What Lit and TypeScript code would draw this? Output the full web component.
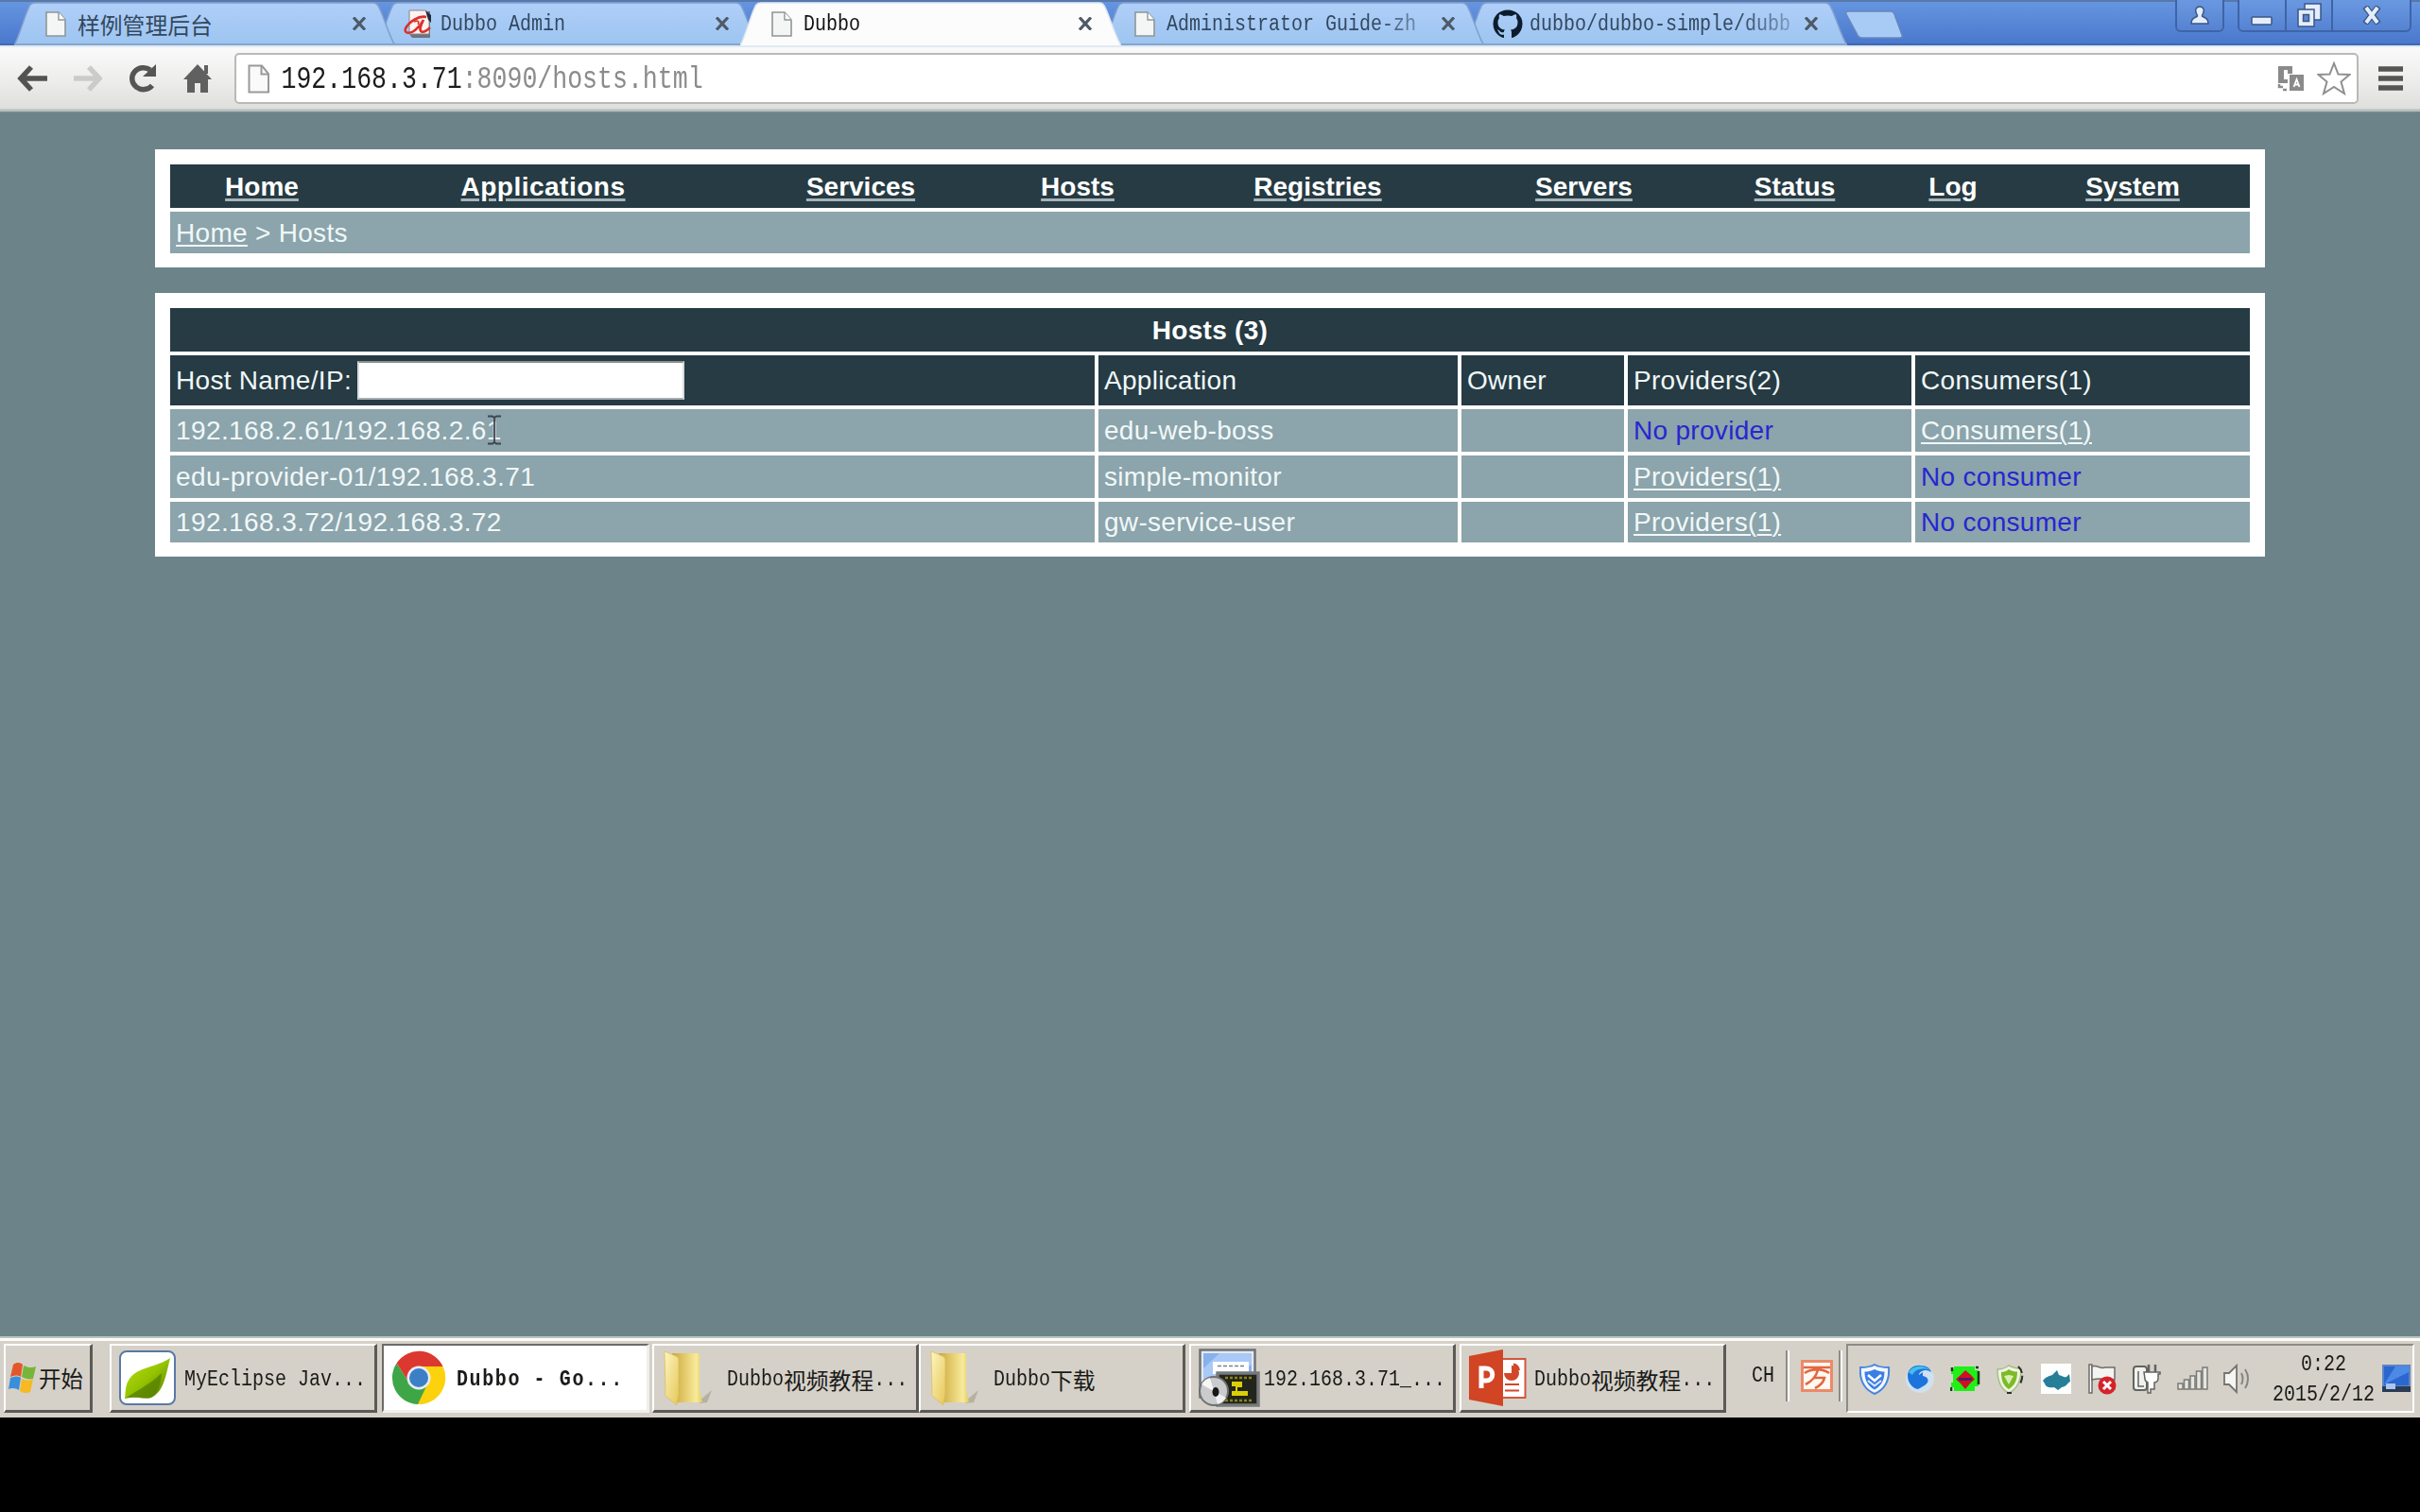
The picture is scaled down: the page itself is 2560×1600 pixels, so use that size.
import { LitElement, html, css, svg, nothing, TemplateResult } from "lit";
import { customElement, property } from "lit/decorators.js";
import { classMap } from "lit/directives/class-map.js";

type Icon = TemplateResult;

const pageIcon = html`<svg width="22" height="27" viewBox="0 0 22 27">
  <path d="M1 1H14L21 9V26H1Z" fill="#f4f6f5" stroke="#8e9796" stroke-width="1.6" />
  <path d="M14 1V9H21" fill="#fff" stroke="#8e9796" stroke-width="1.4" />
</svg>`;

const alibabaIcon = html`<svg width="31" height="31" viewBox="0 0 31 31">
  <path d="M7 2H29V30H10L7 26Z" fill="#6d7480" />
  <path d="M7 1H24L28 5V26H7Z" fill="#fdf3f0" stroke="#8a8388" />
  <path d="M24 1L30 6V14L27 11Z" fill="#222b3a" />
  <path d="M25 8C17 6 7 13 3 20C1 26 8 26 13 22C18 18 21 13 22 11C19 17 17 22 20 23.500C23 24.500 26 22 29 19" fill="none" stroke="#dd2f2b" stroke-width="2.600" />
  <path d="M12 13C16 11 18 13 16 16" fill="none" stroke="#dd2f2b" stroke-width="1.600" />
</svg>`;

const githubIcon = html`<svg width="34" height="33" viewBox="0 0 34 33">
  <path d="M17 1.500C26 1.500 32.500 8 32.500 16C32.500 23.500 28 28.500 22 31C21 31.200 21 30.600 21 30V25.500C21 23.800 20.500 23 20 22.500C24 22 27.500 20.500 27.500 14.500C27.500 12.700 27 11.500 26 10.300C26.200 9.600 26.600 8 25.900 6.300C24 6 22 7.600 21.500 8C18.500 7.200 15.500 7.200 12.500 8C12 7.600 10 6 8.100 6.300C7.400 8 7.800 9.600 8 10.300C7 11.500 6.500 12.700 6.500 14.500C6.500 20.500 10 22 14 22.500C13.300 23 13 24 12.900 25C11.500 25.600 9.500 25.600 8.200 23.600C7.500 22.600 6.500 22.500 6 22.700C7.500 23.700 7.500 25.500 8.500 26.800C9.500 28 11.500 28 13 27.700V30C13 30.600 13 31.200 12 31C6 28.500 1.500 23.500 1.500 16C1.500 8 8 1.500 17 1.500Z" fill="#0c1c2e" />
</svg>`;

interface Tab { title: string; icon: Icon; active?: boolean; }

const TABS: Tab[] = [
  { title: "样例管理后台", icon: pageIcon },
  { title: "Dubbo Admin", icon: alibabaIcon },
  { title: "Dubbo", icon: pageIcon, active: true },
  { title: "Administrator Guide-zh", icon: pageIcon },
  { title: "dubbo/dubbo-simple/dubb", icon: githubIcon },
];

const NAV = ["Home", "Applications", "Services", "Hosts", "Registries", "Servers", "Status", "Log", "System"];

interface Host { name: string; app: string; owner: string; providers: number; consumers: number; }

const HOSTS: Host[] = [
  { name: "192.168.2.61/192.168.2.61", app: "edu-web-boss", owner: "", providers: 0, consumers: 1 },
  { name: "edu-provider-01/192.168.3.71", app: "simple-monitor", owner: "", providers: 1, consumers: 0 },
  { name: "192.168.3.72/192.168.3.72", app: "gw-service-user", owner: "", providers: 1, consumers: 0 },
];

const leafIcon = html`<svg width="60" height="58" viewBox="0 0 60 58">
  <defs><linearGradient id="lf" x1="0" y1="0" x2="1" y2="1"><stop offset=".1" stop-color="#b4da10" /><stop offset=".5" stop-color="#94c400" /><stop offset="1" stop-color="#4f7a00" /></linearGradient></defs>
  <rect x="1" y="1" width="58" height="56" rx="7" fill="#fff" stroke="#5b78a6" stroke-width="2" />
  <path d="M54 8C40 18 20 17 11 30C6 37 7 44 6 51C22 48 28 52 34 50C47 44 49 28 54 8Z" fill="url(#lf)" />
  <path d="M6 51C16 44 30 38 45 24C44 38 40 47 33 50C25 52 18 48 6 51Z" fill="#557f00" opacity=".75" />
</svg>`;

const chromeIcon = html`<svg width="58" height="58" viewBox="0 0 58 58">
  <path d="M29 29V17H54.500A28 28 0 0 1 28 57Z" fill="#fbd20c" />
  <path d="M29 29L38 36L28 57A28 28 0 0 1 5.600 13.500L18 33Z" fill="#3fa648" />
  <path d="M5.600 13.500A28 28 0 0 1 54.500 17H29L18 33Z" fill="#dc3830" />
  <circle cx="29" cy="29" r="12.500" fill="#e6eef2" />
  <circle cx="29" cy="29" r="10" fill="#3c7fc6" />
</svg>`;

const folderIcon = html`<svg width="52" height="60" viewBox="0 0 52 60">
  <defs>
    <linearGradient id="fa" x1="0" y1="0" x2="1" y2="0"><stop offset="0" stop-color="#c9a640" /><stop offset=".45" stop-color="#e6cd6e" /><stop offset=".8" stop-color="#f7ea9c" /><stop offset="1" stop-color="#e3cd55" /></linearGradient>
    <linearGradient id="fb" x1="0" y1="0" x2="1" y2="1"><stop offset="0" stop-color="#fdf6bd" /><stop offset="1" stop-color="#e6c65a" /></linearGradient>
  </defs>
  <path d="M38 54L51 43L46 56L38 57Z" fill="#a8a492" opacity=".7" />
  <path d="M9 4L36 4C38 4 38 5 38 6V42L41 56H14Z" fill="url(#fa)" />
  <path d="M1 2L13 7C15 8 16 9 16 11V46C16 52 14 54 14 59L3 50C1 48 2 46 2 42Z" fill="url(#fb)" stroke="#d8bb55" stroke-width=".7" />
</svg>`;

const remoteIcon = html`<svg width="65" height="62" viewBox="0 0 65 62">
  <rect x="1.500" y="1.500" width="58" height="50" fill="#e6e9ee" stroke="#6d7177" stroke-width="2.500" />
  <rect x="5" y="5" width="51" height="34" fill="#86b1ee" />
  <path d="M5 21L22 5H56V17L20 39H5Z" fill="#a9c9f6" />
  <rect x="15" y="14" width="38" height="13" fill="#fff" />
  <path d="M20 18.500H48" stroke="#7a828e" stroke-width="1.500" stroke-dasharray="4 2" />
  <rect x="20" y="26" width="43" height="34" fill="#23241c" stroke="#777a7c" stroke-width="3.500" />
  <path d="M28 31H58M28 55H58" stroke="#8a8415" stroke-width="2.500" stroke-dasharray="3 2" />
  <path d="M35 35H46V41H41V45H52V50H35V45H39V40H35Z" fill="#dbd005" />
  <circle cx="16" cy="45" r="15" fill="#c9cbcc" stroke="#6f7172" stroke-width="2" />
  <path d="M16 45L3 38A15 15 0 0 1 12 31Z" fill="#f6f6f6" />
  <path d="M16 45L29 52A15 15 0 0 1 20 59Z" fill="#f0f0f0" />
  <ellipse cx="18" cy="46" rx="3.500" ry="5" fill="#16181a" />
</svg>`;

const pptIcon = html`<svg width="61" height="60" viewBox="0 0 61 60">
  <rect x="30" y="10" width="29.500" height="41" fill="#fff" stroke="#d2563c" stroke-width="2" />
  <path d="M45 17A8 8 0 1 1 37 25H45Z" fill="#d2472a" />
  <path d="M47 14.500A8 8 0 0 1 54 22H47Z" fill="#d2472a" />
  <path d="M38 37H53M38 43.500H53" stroke="#d2472a" stroke-width="2" />
  <path d="M0 7L36 0V60L0 53Z" fill="#d14424" />
  <path d="M13 41V20H18C27 20 27 33 18 33H13" fill="none" stroke="#fff" stroke-width="5" />
</svg>`;

interface Task { title: string; icon: Icon; active?: boolean; cls: string; }

const TASKS: Task[] = [
  { title: "MyEclipse Jav...", icon: leafIcon, cls: "t1" },
  { title: "Dubbo - Go...", icon: chromeIcon, active: true, cls: "t2" },
  { title: "Dubbo视频教程...", icon: folderIcon, cls: "t3" },
  { title: "Dubbo下载", icon: folderIcon, cls: "t4" },
  { title: "192.168.3.71_...", icon: remoteIcon, cls: "t5" },
  { title: "Dubbo视频教程...", icon: pptIcon, cls: "t6" },
];

const TRAY: TemplateResult[] = [
  svg`<path d="M16 1C21 4 26 4 31 4C32 17 27 27 16 32C5 27 0 17 1 4C6 4 11 4 16 1Z" fill="#f2f7fe" stroke="#4a86dc" stroke-width="2"/><path d="M16 6C20 8 23.500 8.500 26.500 8.500C26.500 17 23.500 23.500 16 27.500C8.500 23.500 5.500 17 5.500 8.500C8.500 8.500 12 8 16 6Z" fill="#3b7fe4"/><path d="M9 12L16 18L23 12" fill="none" stroke="#fff" stroke-width="2.500"/><path d="M9 18L16 23.500L23 18" fill="none" stroke="#dceafc" stroke-width="2"/>`,
  svg`<circle cx="16" cy="16" r="15" fill="#cfe0f0"/><path d="M3 13C3 5 10 1 17 2C23 2 27 5 28 9C24 6 18 6 15 11V12L19 9V13C26 14 26 20 21 23L14 27C8 26 3 20 3 13Z" fill="#1d74dc"/><path d="M4 9C8 2 19 0 27 7C18 4 11 6 8 12Z" fill="#45bfe6"/>`,
  svg`<path d="M4 3H26V7H30V24H26V29H4V25H1V20H3V11H1V6H4Z" fill="#1ef018"/><path d="M2 4V8M1 25V29M30 8V22M27 4H30" stroke="#123c12" stroke-width="2.500"/><path d="M16 7L22 12L26 16.500L21 21L16 27L11 21L6 16.500L11 12Z" fill="#d01020"/><path d="M9 16.500H23" stroke="#5b1470" stroke-width="3"/>`,
  svg`<path d="M14 2C19 5 23 5 27 5C27 18 23 27 14 31C5 27 2 18 2 6C6 6 10 5 14 2Z" fill="#eef4e4" stroke="#a9bd88" stroke-width="1.500"/><path d="M14 6C17 8 20 8.500 23 8.500C23 18 20 23 14 27C8 23 6 18 6 9C9 9 12 8 14 6Z" fill="#7dbb24"/><path d="M14 12L19 13L14 22L9 13Z" fill="#d9efb4"/><path d="M24 3C29 8 30 15 25 23M12 31H17" fill="none" stroke="#26331f" stroke-width="2" stroke-dasharray="8 3"/>`,
  svg`<rect width="32" height="32" fill="#fdfefe"/><path d="M2 18C5 14 9 13 12 12L17 7L19 12C23 13 25 15 27 14L30 11L31 19C28 20 28 24 22 25L18 28L14 25C9 26 5 25 4 21Z" fill="#267f96"/>`,
  svg`<path d="M3 1V31H6V1Z" fill="#fff" stroke="#6c6c6a" stroke-width="1.500"/><path d="M6 3C12 1 14 6 20 4H30V17C24 19 20 14 6 17Z" fill="#f4f4f2" stroke="#6c6c6a" stroke-width="1.500"/><circle cx="22" cy="23" r="9.500" fill="#d5232c"/><path d="M18 19L26 27M26 19L18 27" stroke="#fff" stroke-width="3"/>`,
  svg`<rect x="2" y="3" width="14" height="25" rx="3" fill="#f1f1ef" stroke="#63635f" stroke-width="2"/><path d="M7 8V24H13" fill="none" stroke="#63635f" stroke-width="1.500"/><path d="M18 1V9M25 1V9" stroke="#63635f" stroke-width="2.500"/><path d="M13 9H30V11H28V16C28 19 25 20 24 20V27H20V31H17V20C15 19 14 18 14 16Z" fill="#fff" stroke="#63635f" stroke-width="1.500"/>`,
  svg`<g fill="#e6e5e1" stroke="#7a7a75" stroke-width="1.500"><rect x="1" y="21" width="5" height="6"/><rect x="7.500" y="17" width="5" height="10"/><rect x="14" y="13" width="5" height="14"/><rect x="20.500" y="8" width="5" height="19"/><rect x="27" y="4" width="5" height="23"/></g>`,
  svg`<path d="M2 10H7L15 2V30L7 22H2Z" fill="#f5f5f3" stroke="#74746f" stroke-width="1.800"/><path d="M20 10C22 14 22 18 20 22M24 6C28 12 28 20 24 26" fill="none" stroke="#85857f" stroke-width="2"/>`,
];

/** Bitmap-style UI label: half-width Latin cells beside full-width CJK cells. */
@customElement("ui-label")
export class UiLabel extends LitElement {
  @property() text = "";

  static styles = css`
    :host { display: inline-flex; align-items: center; height: 30px; white-space: pre; }
    .latin { display: block; font: 20px/30px "Liberation Mono", monospace; transform: scaleY(1.16); }
    .cjk { display: block; font: 23.800px/36px "Noto Sans CJK SC", sans-serif; }
    :host([bold]) .latin { font-weight: 700; letter-spacing: 1.600px; }
  `;

  render() {
    const runs = this.text.match(/[\u4e00-\u9fff]+|[^\u4e00-\u9fff]+/g) ?? [];
    return runs.map((r) => html`<span class=${/[\u4e00-\u9fff]/.test(r) ? "cjk" : "latin"}>${r}</span>`);
  }
}

@customElement("browser-chrome")
export class BrowserChrome extends LitElement {
  static styles = css`
    :host { display: block; flex: none; }
    svg { display: block; flex: none; }
    .strip {
      box-sizing: border-box; height: 48px; display: flex; align-items: flex-start; padding: 2px 9px 0 15px;
      background: linear-gradient(#5878aa 0 2px, #6595e0 2px, #4a78cd 46px, #4268ad 46px 48px);
    }
    .tab { display: grid; width: 403px; height: 46px; margin-right: -19px; }
    .tab > * { grid-area: 1 / 1; }
    .tab:nth-child(1) { z-index: 5; }
    .tab:nth-child(2) { z-index: 4; }
    .tab:nth-child(3) { z-index: 6; }
    .tab:nth-child(4) { z-index: 3; }
    .tab:nth-child(5) { z-index: 2; }
    .face { display: flex; align-items: center; height: 46px; padding: 0 28px 0 33px; }
    .fav { display: flex; width: 34px; height: 33px; align-items: center; }
    .fav.wide { margin-left: -6px; width: 40px; }
    .name { width: 276px; display: flex; margin-right: 14px; padding-top: 1px; color: #33485e; }
    .name.on { color: #111; }
    .name.long { -webkit-mask-image: linear-gradient(90deg, #000 222px, rgba(0,0,0,.35) 276px); mask-image: linear-gradient(90deg, #000 222px, rgba(0,0,0,.35) 276px); }
    .plus { margin: 8px 0 0 16px; }
    .space { flex: 1; }
    .btns { display: flex; margin-top: -2px; height: 34px; border: 2px solid #3e64a8; border-top: 0; border-radius: 0 0 6px 6px; box-sizing: border-box; background: linear-gradient(#6a98e0, #5583d2); }
    .btns > span { display: grid; place-items: center; }
    .user { width: 52px; margin-right: 14px; }
    .user > span { flex: 1; }
    .min { width: 48px; }
    .max { width: 47px; border-left: 2px solid #3e64a8; }
    .cls { width: 81px; border-left: 2px solid #3e64a8; }
    .bar {
      box-sizing: border-box; height: 71px; display: flex; align-items: center; padding: 0 18px 2px 17px;
      background: linear-gradient(#dfeaf5 0 2px, #fafafa 2px, #ececeb 40px, #dededc 67px, #b4bfbe 68px 70px, #7f8f90 70px);
    }
    .ic { width: 34px; height: 34px; margin-right: 24.500px; }
    .ic.last { margin-right: 21px; }
    .omni {
      box-sizing: border-box; flex: 1; height: 54px; display: flex; align-items: center; padding: 0 6px 0 12px;
      border: 2px solid #b9b9b8; border-radius: 5px; background: #fff; margin-top: 1px;
    }
    .url { flex: 1; margin: 2px 0 0 11px; font: 26.560px/44px "Liberation Mono", monospace; color: #8b8b8b; transform: scaleY(1.22); }
    .host { color: #1b1b1b; }
    .star { margin-left: 12px; }
    .menu { margin-left: 21px; }
  `;

  private tab(t: Tab) {
    const wide = t.icon !== pageIcon;
    return html`<div class="tab">
      <svg width="403" height="46" viewBox="0 0 403 46">
        <defs><linearGradient id="tg" x1="0" y1="0" x2="0" y2="1"><stop offset="0" stop-color="#afcff8" /><stop offset="1" stop-color="#9dc4f1" /></linearGradient></defs>
        <path d="M0 46C5 38 13 8 17 3Q19 1 22 1H380Q383 1 385 4C390 12 397 38 403 46Z" fill=${t.active ? "#fcfcfc" : "url(#tg)"} />
        <path d="M0 46C5 38 13 8 17 3Q19 1 22 1H380Q383 1 385 4C390 12 397 38 403 46" fill="none" stroke=${t.active ? "#dce6f2" : "#7f9fce"} stroke-width="1.500" />
        ${t.active ? nothing : svg`<path d="M0 45H403" stroke="#86a6cc" stroke-width="2"/>`}
      </svg>
      <div class="face">
        <span class=${classMap({ fav: true, wide })}>${t.icon}</span>
        <span class=${classMap({ name: true, on: !!t.active, long: t.title.length > 20 })}><ui-label .text=${t.title}></ui-label></span>
        <svg width="16" height="14" viewBox="0 0 16 14"><path d="M2 0.500L14 13.500M14 0.500L2 13.500" stroke="#4e5a66" stroke-width="3.200" /></svg>
      </div>
    </div>`;
  }

  render() {
    return html`
      <div class="strip">
        ${TABS.map((t) => this.tab(t))}
        <svg class="plus" width="64" height="32" viewBox="0 0 64 32"><path d="M4 2H49Q52 2 53 5L61 27Q62 30 58 30H19Q15 30 14 27L2 5Q1 2 4 2Z" fill="#a8cbf6" stroke="#6688bf" stroke-width="1.500" /></svg>
        <span class="space"></span>
        <div class="btns user"><span><svg width="22" height="22" viewBox="0 0 22 22"><path d="M11 2C14.500 2 16 5 15 8C14.500 10 13.500 10.500 13.500 12C15 14 20 13 20 20H2C2 13 7 14 8.500 12C8.500 10.500 7.500 10 7 8C6 5 7.500 2 11 2Z" fill="#e4eefc" stroke="#3b5687" stroke-width="1.500" /></svg></span></div>
        <div class="btns">
          <span class="min"><svg width="26" height="24" viewBox="0 0 26 24"><rect x="2" y="14" width="21" height="8" rx="1" fill="#e4eefc" stroke="#3b5687" stroke-width="1.500" /></svg></span>
          <span class="max"><svg width="26" height="26" viewBox="0 0 26 26"><path d="M8 1H25V18H8Z" fill="#e4eefc" stroke="#3b5687" stroke-width="1.500" /><path d="M1 7H18V25H1Z" fill="#e4eefc" stroke="#3b5687" stroke-width="1.500" /><rect x="6.500" y="12.500" width="6" height="7" fill="#5c87cd" stroke="#3b5687" stroke-width="1.500" /></svg></span>
          <span class="cls"><svg width="22" height="20" viewBox="0 0 22 20"><path d="M4 1L18 19M18 1L4 19" stroke="#3b5687" stroke-width="6.500" /><path d="M5 2L17 18M17 2L5 18" stroke="#e4eefc" stroke-width="4" /></svg></span>
        </div>
      </div>
      <div class="bar">
        <svg class="ic" viewBox="0 0 34 34"><path d="M16 5L5 17L16 29M6 17H33" fill="none" stroke="#535353" stroke-width="5.500" /></svg>
        <svg class="ic" viewBox="0 0 34 34"><path d="M18 5L29 17L18 29M28 17H2" fill="none" stroke="#cbcbcb" stroke-width="5.500" /></svg>
        <svg class="ic" viewBox="0 0 34 34"><path d="M27 24.500A12 11.500 0 1 1 25 8" fill="none" stroke="#555" stroke-width="5.500" /><path d="M31 2V15H17Z" fill="#555" /></svg>
        <svg class="ic last" viewBox="0 0 34 34"><path d="M16 2L31 18H27V32H19V22H13V32H5V18H1Z" fill="#606060" /><rect x="23" y="3" width="4" height="9" fill="#606060" /></svg>
        <div class="omni">
          <svg width="25" height="31" viewBox="0 0 25 31"><path d="M1.500 1.500H15L22 10V29.500H1.500Z" fill="#fafafa" stroke="#999" stroke-width="2" /><path d="M14.500 2V10.500H22" fill="none" stroke="#999" stroke-width="2" /></svg>
          <span class="url"><span class="host">192.168.3.71</span>:8090/hosts.html</span>
          <svg width="30" height="28" viewBox="0 0 30 28"><path d="M1 1H16V9H11V5H7V15H11V19H1Z" fill="#8a8a8a" /><path d="M13 10H28V27H13Z" fill="#8a8a8a" /><path d="M17.500 23L20.500 15L23.500 23M18.500 20.500H22.500" stroke="#fff" stroke-width="1.800" fill="none" /><path d="M2 20V23H6M6 26H10" stroke="#8a8a8a" stroke-width="2.500" fill="none" /></svg>
          <svg class="star" width="36" height="36" viewBox="0 0 36 36"><path d="M18 2L22.500 13.500L34.500 14L25.500 21.500L29 34L18 27L7 34L10.500 21.500L1.500 14L13.500 13.500Z" fill="#fff" stroke="#8f8f8f" stroke-width="2" /></svg>
        </div>
        <svg class="menu" width="26" height="28" viewBox="0 0 26 28"><path d="M0 4H26M0 14H26M0 24H26" stroke="#555" stroke-width="5.500" /></svg>
      </div>`;
  }
}

@customElement("hosts-page")
export class HostsPage extends LitElement {
  static styles = css`
    :host { display: flex; flex-direction: column; gap: 27px; flex: 1; box-sizing: border-box; padding: 39px 164px 0; background: #6c838a; font: 28px/44px "Liberation Sans", Arial, sans-serif; letter-spacing: .3px; color: #f0f8f9; }
    a { color: inherit; text-decoration: underline; text-decoration-thickness: 2px; text-underline-offset: 3px; }
    .panel { display: flex; flex-direction: column; gap: 4px; padding: 16px 16px 15px; background: #fff; }
    .nav { display: grid; grid-template-columns: 194px 401px 271px 188px 320px 243px 203px 132px 248px; height: 46px; line-height: 48px; background: #263b43; text-align: center; font-weight: 700; color: #fff; letter-spacing: 0; }
    .nav span:nth-child(2) { letter-spacing: .5px; }
    .nav a { text-decoration-thickness: 3px; text-decoration-color: #a7b3b8; }
    .crumb { height: 44px; line-height: 46px; padding-left: 6px; background: #8ca4ab; }
    .title { height: 46px; line-height: 48px; background: #263b43; text-align: center; font-weight: 700; color: #fff; }
    .row { display: grid; grid-template-columns: 978px 380px 172px 300px 354px; gap: 4px; height: 45px; line-height: 45px; }
    .row:last-child { height: 43px; line-height: 43px; }
    .row.head { height: 53px; line-height: 51px; }
    .cell { padding-left: 6px; background: #8ca4ab; }
    .head .cell { background: #263b43; display: flex; align-items: center; }
    .none { color: #2626d2; }
    .field { width: 346px; height: 41px; box-sizing: border-box; margin-left: 6px; border: 2px solid; background: #fff; padding: 0; outline: 0; border-color: #8c8f90 #d8dcde #a9aeb2; }
    .digits { letter-spacing: .4px; }
    .first { position: relative; }
    .cursor { position: absolute; left: 335px; top: 6px; }
  `;

  private link(label: string, n: number, none: string) {
    return n ? html`<a>${label}(${n})</a>` : html`<span class="none">${none}</span>`;
  }

  render() {
    return html`
      <div class="panel">
        <nav class="nav">${NAV.map((n) => html`<span><a>${n}</a></span>`)}</nav>
        <div class="crumb"><a>Home</a> &gt; Hosts</div>
      </div>
      <div class="panel">
        <div class="title">Hosts (3)</div>
        <div class="row head">
          <div class="cell"><span>Host Name/IP:</span><input class="field" /></div>
          <div class="cell">Application</div>
          <div class="cell">Owner</div>
          <div class="cell">Providers(2)</div>
          <div class="cell">Consumers(1)</div>
        </div>
        ${HOSTS.map((h, i) => html`<div class="row">
          <div class="cell first"><span class="digits">${h.name}</span>${i === 0
            ? html`<svg class="cursor" width="16" height="32" viewBox="0 0 16 32"><path d="M1 1.500H6L8 3L10 1.500H15M8 3V29M1 30.500H6L8 29L10 30.500H15" fill="none" stroke="#3c4450" stroke-width="1.800" /></svg>`
            : nothing}</div>
          <div class="cell">${h.app}</div>
          <div class="cell">${h.owner}</div>
          <div class="cell">${this.link("Providers", h.providers, "No provider")}</div>
          <div class="cell">${this.link("Consumers", h.consumers, "No consumer")}</div>
        </div>`)}
      </div>`;
  }
}

@customElement("task-bar")
export class TaskBar extends LitElement {
  static styles = css`
    :host { display: flex; flex: none; box-sizing: border-box; height: 86px; padding: 8px 6px 5px 4px; color: #1a1a18; background: linear-gradient(#b9c3c2 0 2px, #fbfbf8 2px 5px, #d5d1c8 5px); }
    svg { display: block; flex: none; }
    .btn { box-sizing: border-box; height: 73px; display: flex; align-items: center; border: 2px solid; border-color: #fff #5c5a56 #5c5a56 #fff; border-right-width: 3px; border-bottom-width: 3px; background: #d5d1c8; }
    .start { width: 94px; padding-left: 3px; gap: 2px; margin-right: 18px; }
    .start .w { font: 23.500px/36px "Noto Sans CJK SC", sans-serif; white-space: nowrap; }
    .task { width: 283px; padding-left: 8px; }
    .task ui-label { margin-top: 4px; }
    .task.on { background: #fff; border-color: #6d6b67 #f0efec #f0efec #6d6b67; }
    .icon { width: 69px; display: flex; align-items: center; flex: none; }
    .t1 { margin-right: 5px; }
    .t2 { margin-right: 3px; }
    .t3 .icon, .t4 .icon { padding-left: 2px; width: 67px; }
    .t3 { width: 282px; }
    .t4 { width: 282px; margin-right: 4px; }
    .t5 { width: 282px; margin-right: 4px; }
    .t6 { width: 282px; margin-right: 27px; }
    .ime { display: flex; align-items: center; height: 68px; }
    .sep { width: 2px; height: 54px; background: #8f8c86; border-right: 2px solid #fff; margin: 0 12px; }
    .sep.r { margin: 0 0 0 6px; }
    .tray { box-sizing: border-box; margin-left: 4px; height: 73px; flex: 1; display: flex; align-items: center; padding: 0 2px 0 12px; border: 2px solid; border-color: #8d8b85 #fff #fff #8d8b85; }
    .icons { display: grid; grid-template-columns: repeat(9, 48px); flex: none; height: 32px; }
    .clock { width: 112px; margin-top: 3px; margin-left: 3px; display: flex; flex-direction: column; align-items: center; gap: 2px; }
    .desk { margin-left: auto; }
  `;

  render() {
    return html`
      <div class="btn start">
        <svg width="30" height="34" viewBox="0 0 30 34">
          <path d="M5 3C9 0 13 1 15 3L13 16C10 14 6 14 2 16Z" fill="#e4572a" />
          <path d="M16 4C20 6 25 7 29 5L26 18C22 19 18 18 14 16Z" fill="#77b53a" />
          <path d="M2 17C6 15 10 15 13 17L11 30C8 28 4 27 0 29Z" fill="#3c8edb" />
          <path d="M14 18C18 20 22 20 26 19L23 32C19 34 15 33 12 31Z" fill="#f6b921" />
        </svg>
        <span class="w">开始</span>
      </div>
      ${TASKS.map((t) => html`<div class=${`btn task ${t.cls} ${t.active ? "on" : ""}`}>
        <span class="icon">${t.icon}</span><ui-label ?bold=${!!t.active} .text=${t.title}></ui-label>
      </div>`)}
      <div class="ime">
        <ui-label text="CH"></ui-label>
        <span class="sep"></span>
        <svg width="34" height="34" viewBox="0 0 34 34"><rect x="1.500" y="1.500" width="31" height="31" fill="#fff8f3" stroke="#ec8a68" stroke-width="3" /><path d="M3 8H31M4 14C11 9 23 9 30 14M18 11C16 18 11 23 5 26M13 19H25C24 24 21 27 15 30" fill="none" stroke="#e2683f" stroke-width="2.600" /></svg>
        <span class="sep r"></span>
      </div>
      <div class="tray">
        <div class="icons">${TRAY.map((t) => html`<svg width="34" height="33" viewBox="0 0 34 33">${t}</svg>`)}</div>
        <div class="clock"><ui-label text="0:22"></ui-label><ui-label text="2015/2/12"></ui-label></div>
        <svg class="desk" width="30" height="30" viewBox="0 0 30 30"><rect x="1" y="1" width="28" height="22" fill="#2c66cf" stroke="#5b86c8" stroke-width="2" /><path d="M2 21L14 2H28V8Z" fill="#4d8ae6" /><rect x="0" y="23" width="30" height="6" fill="#2c3b55" /><rect x="4" y="20" width="10" height="6" fill="#a9c6ef" /></svg>
      </div>`;
  }
}

@customElement("app-root")
export class AppRoot extends LitElement {
  static styles = css`
    :host { display: flex; flex-direction: column; width: 2560px; height: 1600px; overflow: hidden; background: #000; }
    .foot { flex: none; height: 100px; background: #000; }
  `;

  render() {
    return html`<browser-chrome></browser-chrome><hosts-page></hosts-page><task-bar></task-bar><div class="foot"></div>`;
  }
}
